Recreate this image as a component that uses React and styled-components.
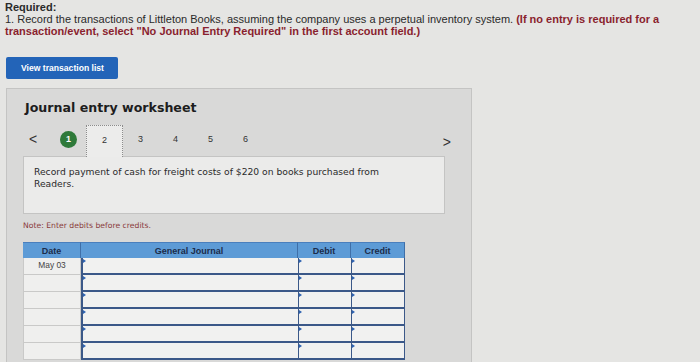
import React from "react";
import styled, { createGlobalStyle } from "styled-components";

const GlobalStyle = createGlobalStyle`
  html, body {
    margin: 0;
    padding: 0;
    background: #e5e5e3;
    width: 700px;
    height: 362px;
    overflow: hidden;
  }
`;

const rows = ["May 03", "", "", "", "", ""];

export default function App() {
  return (
    <Styles.Page>
      <GlobalStyle />
      <Styles.Question>
        <Styles.Required>Required:</Styles.Required>
        <Styles.Line>
          1. Record the transactions of Littleton Books, assuming the company uses a perpetual
          inventory system. <Styles.Red>(If no entry is required for a</Styles.Red>
        </Styles.Line>
        <Styles.Line>
          <Styles.Red>
            transaction/event, select "No Journal Entry Required" in the first account field.)
          </Styles.Red>
        </Styles.Line>
      </Styles.Question>

      <Styles.Button>View transaction list</Styles.Button>

      <Styles.Panel>
        <Styles.Title>Journal entry worksheet</Styles.Title>
        <Styles.Nav>
          <Styles.Arrow>&lt;</Styles.Arrow>
          <Styles.Step>
            <Styles.Done>1</Styles.Done>
          </Styles.Step>
          <Styles.ActiveStep>2</Styles.ActiveStep>
          {[3, 4, 5, 6].map((n) => (
            <Styles.Step key={n}>{n}</Styles.Step>
          ))}
          <Styles.Next>&gt;</Styles.Next>
        </Styles.Nav>
        <Styles.Prompt>
          Record payment of cash for freight costs of $220 on books purchased from Readers.
        </Styles.Prompt>
        <Styles.Note>Note: Enter debits before credits.</Styles.Note>

        <Styles.Table>
          <Styles.Head>Date</Styles.Head>
          <Styles.Head>General Journal</Styles.Head>
          <Styles.Head>Debit</Styles.Head>
          <Styles.Head>Credit</Styles.Head>
          {rows.map((date, i) => (
            <React.Fragment key={i}>
              <Styles.DateCell>{date}</Styles.DateCell>
              <Styles.Input />
              <Styles.Input />
              <Styles.Input />
            </React.Fragment>
          ))}
        </Styles.Table>
      </Styles.Panel>
    </Styles.Page>
  );
}

const Styles = {
  Page: styled.div`
    padding: 1px 0 0 5px;
    font-family: "Liberation Sans", Arial, sans-serif;
    color: #222;
  `,
  Question: styled.div`
    font-size: 11px;
    line-height: 12px;
  `,
  Required: styled.div`
    font-weight: bold;
    color: #2a2a2a;
  `,
  Line: styled.div`
    white-space: nowrap;
    color: #2a2a2a;
  `,
  Red: styled.span`
    color: #8a1f2e;
    font-weight: bold;
  `,
  Button: styled.div`
    margin: 20px 0 0 1px;
    width: 112px;
    height: 22px;
    background: #2364b8;
    border-radius: 2px;
    color: #fff;
    font-weight: bold;
    font-size: 8.6px;
    display: flex;
    align-items: center;
    padding-left: 15px;
    box-sizing: border-box;
  `,
  Panel: styled.div`
    margin: 9px 0 0 1px;
    width: 466px;
    height: 290px;
    box-sizing: border-box;
    background: #d9d9d8;
    border: 1px solid #c4c4c3;
    padding: 11px 0 0 16px;
  `,
  Title: styled.div`
    font-family: "DejaVu Sans", Verdana, sans-serif;
    font-weight: bold;
    font-size: 12.6px;
    color: #1d1d1d;
    padding-left: 2px;
    height: 25px;
  `,
  Nav: styled.div`
    display: flex;
    align-items: stretch;
    width: 430px;
    height: 31px;
    font-family: "Liberation Sans", Arial, sans-serif;
    font-size: 9px;
    color: #333;
  `,
  Arrow: styled.div`
    width: 28px;
    padding: 0 0 3px 6px;
    box-sizing: border-box;
    display: flex;
    align-items: center;
    font-size: 14px;
    color: #333;
  `,
  Next: styled.div`
    margin-left: auto;
    margin-right: 2px;
    display: flex;
    align-items: center;
    font-size: 14px;
    color: #333;
    padding-top: 2px;
  `,
  Step: styled.div`
    width: 35px;
    padding-bottom: 3px;
    display: flex;
    align-items: center;
    justify-content: center;
  `,
  ActiveStep: styled.div`
    width: 37px;
    padding-bottom: 3px;
    display: flex;
    align-items: center;
    justify-content: center;
    background: #ececeb;
    border: 1px dotted #8c8c8c;
    border-bottom: none;
    box-sizing: border-box;
    margin-bottom: -1px;
    position: relative;
    z-index: 1;
  `,
  Done: styled.span`
    width: 17px;
    height: 17px;
    border-radius: 50%;
    background: #2f7a3a;
    color: #fff;
    font-weight: bold;
    font-size: 9px;
    display: flex;
    align-items: center;
    justify-content: center;
  `,
  Prompt: styled.div`
    width: 422px;
    height: 58px;
    box-sizing: border-box;
    background: #ebebea;
    border: 1px solid #c4c4c3;
    padding: 9px 40px 0 10px;
    font-family: "DejaVu Sans", Verdana, sans-serif;
    font-size: 9.2px;
    line-height: 12px;
    color: #2a2a2a;
  `,
  Note: styled.div`
    margin-top: 7px;
    font-family: "DejaVu Sans", Verdana, sans-serif;
    font-size: 7.7px;
    color: #8a3b3b;
    height: 21px;
  `,
  Table: styled.div`
    display: grid;
    grid-template-columns: 58px 217px 53px 54px;
    grid-auto-rows: 17px;
    grid-template-rows: 16px;
    width: 382px;
  `,
  Head: styled.div`
    background: #5d9bd6;
    border-right: 1px solid #3f6fa8;
    border-top: 1px solid #4a7fbd;
    display: flex;
    align-items: center;
    justify-content: center;
    font-weight: bold;
    font-size: 9px;
    color: #1c2c4a;
    &:last-of-type {
      border-right: 1px solid #4a7fbd;
    }
  `,
  DateCell: styled.div`
    background: #efefee;
    border: 1px solid #c9c9c8;
    border-top: none;
    display: flex;
    align-items: center;
    justify-content: center;
    font-size: 8.4px;
    color: #444;
    padding-bottom: 2px;
  `,
  Input: styled.div`
    background: #f1f1f0;
    border-left: 2px solid #3b5888;
    border-bottom: 2px solid #3b5888;
    position: relative;
    &:nth-child(4n + 3),
    &:nth-child(4n + 4) {
      border-left-width: 1.5px;
    }
    &:nth-child(4n + 4) {
      border-right: 1.5px solid #3b5888;
    }
    &::before {
      content: "";
      position: absolute;
      left: 0;
      top: 1px;
      border-left: 3px solid #2d62b0;
      border-top: 2px solid transparent;
      border-bottom: 2px solid transparent;
    }
  `,
};
